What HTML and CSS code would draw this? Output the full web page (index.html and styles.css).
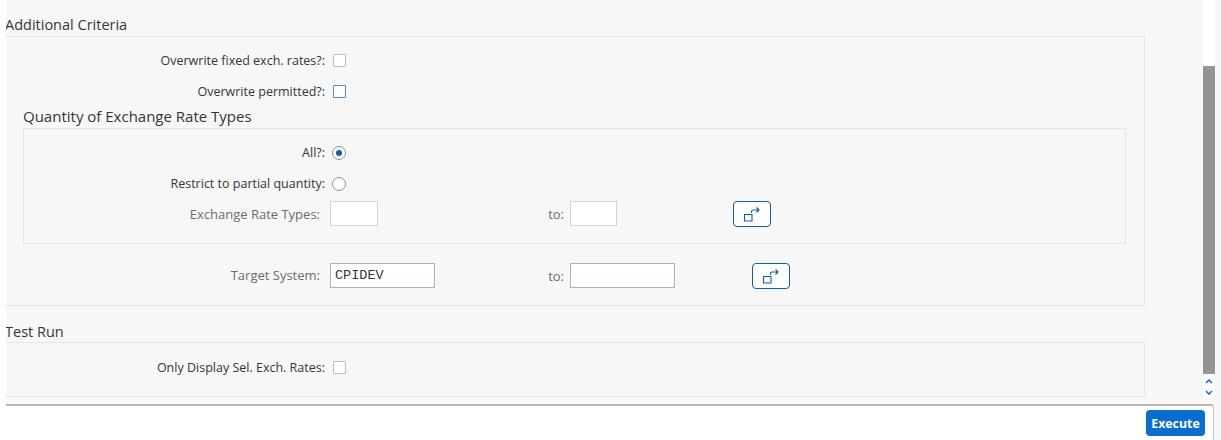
FILE: index.html
```html
<!DOCTYPE html>
<html lang="en">
<head>
    <meta charset="UTF-8">
    <title>Exchange Rates</title>
    <link rel="stylesheet" href="styles.css">
</head>
<body>
    <div class="main">
        <div class="content">
            <h2 class="group-title">Additional Criteria</h2>
            <div class="group">
                <div class="row">
                    <label class="label">Overwrite fixed exch. rates?:</label>
                    <span class="check"></span>
                </div>
                <div class="row">
                    <label class="label">Overwrite permitted?:</label>
                    <span class="check check-blue"></span>
                </div>
                <h3 class="sub-title">Quantity of Exchange Rate Types</h3>
                <div class="sub-group">
                    <div class="row">
                        <label class="label">All?:</label>
                        <span class="radio radio-on"></span>
                    </div>
                    <div class="row">
                        <label class="label">Restrict to partial quantity:</label>
                        <span class="radio"></span>
                    </div>
                    <div class="row row-range">
                        <label class="label label-muted">Exchange Rate Types:</label>
                        <div class="from-cell">
                            <input class="field field-short field-off" type="text" disabled>
                        </div>
                        <label class="label-to">to:</label>
                        <input class="field field-short field-off" type="text" disabled>
                        <button class="more-btn more-btn-short" type="button">
                            <svg width="18" height="18" viewBox="0 0 18 18"><path d="M1.5 9.5h7.5v6.5h-7.5zM8.5 8V6.5Q8.5 5 10 5H16M13.5 2.5L16 5l-2.5 2.5" fill="none" stroke="#0a5fb4" stroke-width="1.1"/></svg>
                        </button>
                    </div>
                </div>
                <div class="row row-target">
                    <label class="label label-muted">Target System:</label>
                    <div class="from-cell">
                        <input class="field field-long" type="text" value="CPIDEV">
                    </div>
                    <label class="label-to">to:</label>
                    <input class="field field-long" type="text">
                    <button class="more-btn" type="button">
                        <svg width="18" height="18" viewBox="0 0 18 18"><path d="M1.5 9.5h7.5v6.5h-7.5zM8.5 8V6.5Q8.5 5 10 5H16M13.5 2.5L16 5l-2.5 2.5" fill="none" stroke="#0a5fb4" stroke-width="1.1"/></svg>
                    </button>
                </div>
            </div>
            <h2 class="group-title group-title-next">Test Run</h2>
            <div class="group group-test">
                <div class="row">
                    <label class="label">Only Display Sel. Exch. Rates:</label>
                    <span class="check"></span>
                </div>
            </div>
        </div>
        <div class="scrollbar">
            <div class="scroll-space"></div>
            <div class="scroll-thumb"></div>
            <div class="scroll-arrows">
                <svg width="12" height="24" viewBox="0 0 12 24"><path d="M3 9l3-3 3 3M3 17l3 3 3-3" fill="none" stroke="#0a5fb4" stroke-width="1.3"/></svg>
            </div>
        </div>
    </div>
    <div class="footer">
        <button class="execute" type="button">Execute</button>
    </div>
</body>
</html>
```

FILE: styles.css
```css
html, body {
    margin: 0;
    height: 440px;
    overflow: hidden;
}
body {
    background-color: #f7f7f7;
    border-left: 6px solid #fff;
    font-family: "Open Sans", "Noto Sans", sans-serif;
    font-size: 12.5px;
    color: #32363a;
}
.main {
    display: flex;
    height: 404px;
}
.content {
    width: 1139px;
    margin-right: 58px;
}
.group-title {
    height: 36px;
    margin: 0;
    padding-top: 14px;
    box-sizing: border-box;
    font-size: 14.5px;
    font-weight: normal;
    line-height: 22px;
    overflow: hidden;
    text-indent: -1px;
}
.group-title-next {
    padding-top: 15px;
}
.group {
    box-sizing: border-box;
    border: 1px solid #e5e5e5;
    border-left: none;
    padding: 8px 0 14px;
}
.group-test {
    padding: 9px 0 13px;
}
.sub-title {
    height: 21px;
    margin: 0 0 0 17px;
    font-size: 15px;
    font-weight: normal;
    line-height: 19px;
}
.sub-group {
    margin: 0 18px 0 17px;
    border: 1px solid #e5e5e5;
    padding: 8px 0 13px;
}
.row {
    display: flex;
    align-items: center;
    height: 31px;
}
.row-range {
    align-items: flex-start;
    box-sizing: border-box;
    padding-top: 2px;
}
.row-range .label,
.row-range .label-to {
    line-height: 27px;
}
.row-target {
    margin-top: 16px;
}
.label {
    width: 319px;
    padding-bottom: 1px;
    text-align: right;
    white-space: nowrap;
}
.sub-group .label {
    width: 301px;
}
.label-muted {
    width: 314px;
    margin-right: 5px;
    font-size: 13px;
    color: #6a6d70;
}
.sub-group .label-muted {
    width: 296px;
}
.check {
    width: 11px;
    height: 11px;
    margin-left: 8px;
    background-color: #fff;
    border: 1px solid #b9bec4;
    border-radius: 1px;
}
.check-blue {
    border-color: #4f8bc9;
}
.radio {
    width: 12px;
    height: 12px;
    margin-left: 7px;
    background-color: #fff;
    border: 1px solid #89919a;
    border-radius: 50%;
    position: relative;
}
.radio-on::after {
    content: "";
    position: absolute;
    left: 3px;
    top: 3px;
    width: 6px;
    height: 6px;
    border-radius: 50%;
    background-color: #0a5fb4;
}
.from-cell {
    width: 215px;
    margin-left: 5px;
    flex: none;
}
.label-to {
    width: 19px;
    margin-right: 6px;
    font-size: 13px;
    color: #6a6d70;
    text-align: right;
}
.field {
    display: block;
    box-sizing: border-box;
    height: 25px;
    padding: 0 4px;
    background-color: #fff;
    border: 1px solid #a9b4be;
    border-radius: 0;
    font-family: "Liberation Mono", monospace;
    font-size: 13.5px;
    color: #32363a;
}
.field-off {
    border-color: #d0d4d8;
}
.field-short {
    width: 47px;
}
.from-cell .field-short {
    width: 48px;
}
.field-long {
    width: 105px;
}
.more-btn {
    display: flex;
    align-items: center;
    justify-content: center;
    width: 38px;
    height: 26px;
    margin-left: 77px;
    padding: 0;
    background-color: #fff;
    border: 1px solid #0a5fb4;
    border-radius: 4px;
}
.more-btn-short {
    margin-left: 116px;
}
.scrollbar {
    display: flex;
    flex-direction: column;
    width: 12px;
    height: 398px;
    background-color: #fff;
}
.scroll-space {
    height: 66px;
}
.scroll-thumb {
    height: 308px;
    background-color: #949494;
}
.scroll-arrows {
    height: 24px;
}
.scroll-arrows svg {
    display: block;
}
.footer {
    box-sizing: border-box;
    display: flex;
    justify-content: flex-end;
    width: 1208px;
    height: 36px;
    padding: 4px 8px 0 0;
    background-color: #fff;
    border-top: 2px solid #b5b5b5;
    border-right: 1px solid #c4c4c4;
    border-top-right-radius: 3px;
}
.execute {
    width: 59px;
    height: 26px;
    padding: 0;
    background-color: #0a6ed1;
    border: none;
    border-radius: 4px;
    color: #fff;
    font-family: "Open Sans", "Noto Sans", sans-serif;
    font-size: 12.35px;
    font-weight: bold;
}
```
